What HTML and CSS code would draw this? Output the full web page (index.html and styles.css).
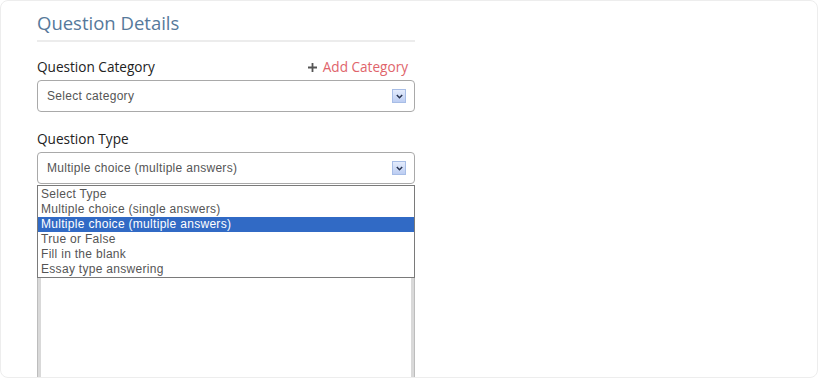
FILE: index.html
```html
<!DOCTYPE html>
<html lang="en">
<head>
  <meta charset="UTF-8">
  <meta name="viewport" content="width=device-width, initial-scale=1.0">
  <title>Question Details</title>
  <link rel="stylesheet" href="styles.css">
</head>
<body>
  <div class="card">
    <div class="panel">
      <h2 class="panel-title">Question Details</h2>

      <div class="field">
        <div class="field-head">
          <label class="field-label">Question Category</label>
          <a class="add-link" href="#">
            <svg class="plus" width="9" height="9" viewBox="0 0 9 9"><path d="M4.5 0 V9 M0 4.5 H9" stroke="#555" stroke-width="1.8"/></svg>
            Add Category
          </a>
        </div>
        <div class="select">
          <span class="select-text">Select category</span>
          <span class="select-arrow">
            <svg width="7" height="5" viewBox="0 0 7 5"><path d="M0.8 1 L3.5 3.7 L6.2 1" fill="none" stroke="#27334f" stroke-width="1.5"/></svg>
          </span>
        </div>
      </div>

      <div class="field">
        <div class="field-head">
          <label class="field-label">Question Type</label>
        </div>
        <div class="select open">
          <span class="select-text">Multiple choice (multiple answers)</span>
          <span class="select-arrow">
            <svg width="7" height="5" viewBox="0 0 7 5"><path d="M0.8 1 L3.5 3.7 L6.2 1" fill="none" stroke="#27334f" stroke-width="1.5"/></svg>
          </span>
          <ul class="options">
            <li>Select Type</li>
            <li>Multiple choice (single answers)</li>
            <li class="selected">Multiple choice (multiple answers)</li>
            <li>True or False</li>
            <li>Fill in the blank</li>
            <li>Essay type answering</li>
          </ul>
        </div>
      </div>

      <div class="text-box"></div>
    </div>
  </div>
</body>
</html>
```

FILE: styles.css
```css
html, body {
  margin: 0;
  padding: 0;
  background: #fff;
}
body {
  font-family: "Open Sans", sans-serif;
  color: #222;
}
.card {
  height: 100vh;
  box-sizing: border-box;
  border: 1px solid #ededed;
  border-radius: 8px;
  overflow: hidden;
  background: #fff;
}
.panel {
  width: 378px;
  margin-left: 36px;
  padding-top: 10px;
}
.panel-title {
  margin: 0;
  font-size: 18.5px;
  line-height: 24px;
  font-weight: normal;
  color: #56799b;
  padding-bottom: 5px;
  border-bottom: 2px solid #ececec;
}
.field {
  margin-top: 15px;
}
.field + .field {
  margin-top: 17px;
}
.field-head {
  display: flex;
  justify-content: space-between;
  align-items: baseline;
  height: 20px;
  line-height: 20px;
  margin-bottom: 3px;
}
.field-label {
  font-size: 13.6px;
  color: #222;
}
.add-link {
  font-size: 13.6px;
  color: #e0646b;
  text-decoration: none;
  margin-right: 7px;
}
.add-link .plus {
  margin-right: 2px;
}
.select {
  position: relative;
  height: 32px;
  box-sizing: border-box;
  border: 1px solid #a9a9a9;
  border-radius: 4px;
  display: flex;
  align-items: center;
  justify-content: space-between;
  padding: 0 8px 0 9px;
  font-family: "Liberation Sans", Arial, sans-serif;
  font-size: 12px;
  letter-spacing: 0.3px;
  color: #555;
  background: #fff;
}
.select-arrow {
  width: 12px;
  height: 12px;
  border: 1px solid #a7bde6;
  background: linear-gradient(#e4ecfc, #bccdf2);
  display: flex;
  align-items: center;
  justify-content: center;
}
.options {
  position: absolute;
  top: calc(100% + 2px);
  left: -1px;
  right: -1px;
  margin: 0;
  padding: 1px 0 0;
  list-style: none;
  border: 1px solid #7a7a7a;
  background: #fff;
  z-index: 2;
}
.options li {
  line-height: 15px;
  height: 15px;
  padding-left: 3px;
  color: #555;
  white-space: nowrap;
}
.options li.selected {
  background: #316ac5;
  color: #fff;
}
.text-box {
  margin-top: 20px;
  height: 300px;
  border: 1px solid #bdbdbd;
  box-shadow: inset 3px 0 0 #d9d9d9, inset -3px 0 0 #d9d9d9;
}
```
